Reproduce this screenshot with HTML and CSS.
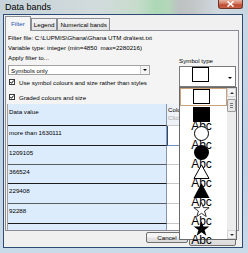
FILE: index.html
```html
<!DOCTYPE html>
<html lang="en">
<head>
    <meta charset="UTF-8">
    <title>Data bands</title>
    <link rel="stylesheet" href="styles.css">
</head>
<body>
    <div class="window">
        <div class="titlebar">
            <span class="title">Data bands</span>
            <span class="close">
                <svg width="9" height="6" viewBox="0 0 9 6"><path d="M1.5 0.5 L7.5 5.5 M7.5 0.5 L1.5 5.5" stroke="#fff" stroke-width="1.6"/></svg>
            </span>
        </div>
        <div class="client">
            <div class="tabs">
                <div class="tab active">Filter</div>
                <div class="tab">Legend</div>
                <div class="tab">Numerical bands</div>
            </div>
            <div class="panel">
                <div class="line">Filter file: C:\LUPMIS\Ghana\Ghana UTM dra\test.txt</div>
                <div class="line">Variable type: integer (min=4850&nbsp; max=2280216)</div>
                <div class="options">
                    <div class="opt-left">
                        <div class="line">Apply filter to...</div>
                        <div class="select">
                            <span>Symbols only</span>
                            <span class="select-btn"><span class="caret"></span></span>
                        </div>
                        <div class="check">
                            <span class="box"><svg width="4" height="4" viewBox="0 0 4 4"><path d="M0.3 1.9 L1.5 3.3 L3.7 0.5" stroke="#000" stroke-width="1" fill="none"/></svg></span>
                            Use symbol colours and size rather than styles
                        </div>
                        <div class="check second">
                            <span class="box"><svg width="4" height="4" viewBox="0 0 4 4"><path d="M0.3 1.9 L1.5 3.3 L3.7 0.5" stroke="#000" stroke-width="1" fill="none"/></svg></span>
                            Graded colours and size
                        </div>
                    </div>
                    <div class="opt-right">
                        <div class="line">Symbol type</div>
                        <div class="combo">
                            <svg class="shape" width="17" height="15" viewBox="0 0 17 15"><rect x="0.5" y="0.5" width="16" height="14" fill="#fff" stroke="#000"/></svg>
                            <span class="caret combo-caret"></span>

                            <div class="droplist">
                                <div class="items">
                                    <div class="item sel">
                                        <div class="sym">
                                            <svg class="shape" width="17" height="15" viewBox="0 0 17 15"><rect x="0.5" y="0.5" width="16" height="14" fill="#fff" stroke="#000"/></svg>
                                        </div>
                                    </div>
                                    <div class="item">
                                        <div class="sym">
                                            <svg class="shape" width="17" height="15" viewBox="0 0 17 15"><rect x="0" y="0" width="17" height="15" fill="#000"/></svg>
                                            <span class="abc">Abc</span>
                                        </div>
                                    </div>
                                    <div class="item">
                                        <div class="sym">
                                            <svg class="shape" width="17" height="15" viewBox="0 0 17 15"><circle cx="8.5" cy="7.5" r="7" fill="#fff" stroke="#000"/></svg>
                                            <span class="abc">Abc</span>
                                        </div>
                                    </div>
                                    <div class="item">
                                        <div class="sym">
                                            <svg class="shape" width="17" height="15" viewBox="0 0 17 15"><circle cx="8.5" cy="7.5" r="7.5" fill="#000"/></svg>
                                            <span class="abc">Abc</span>
                                        </div>
                                    </div>
                                    <div class="item">
                                        <div class="sym">
                                            <svg class="shape" width="17" height="15" viewBox="0 0 17 15"><polygon points="8.5,0.8 1,14.5 16,14.5" fill="#fff" stroke="#000"/></svg>
                                            <span class="abc">Abc</span>
                                        </div>
                                    </div>
                                    <div class="item">
                                        <div class="sym">
                                            <svg class="shape" width="17" height="15" viewBox="0 0 17 15"><polygon points="8.5,0 0.5,15 16.5,15" fill="#000"/></svg>
                                            <span class="abc">Abc</span>
                                        </div>
                                    </div>
                                    <div class="item">
                                        <div class="sym">
                                            <svg class="shape" width="17" height="15" viewBox="0 0 17 15"><polygon points="8.5,0.5 10.38,5.6 16.1,5.7 11.54,9.1 13.2,14.5 8.5,11.3 3.8,14.5 5.46,9.1 0.9,5.7 6.62,5.6" fill="#fff" stroke="#000" stroke-width="0.8"/></svg>
                                            <span class="abc">Abc</span>
                                        </div>
                                    </div>
                                    <div class="item">
                                        <div class="sym">
                                            <svg class="shape" width="17" height="15" viewBox="0 0 17 15"><polygon points="8.5,0 10.38,5.4 16.3,5.5 11.6,9 13.4,14.8 8.5,11.3 3.6,14.8 5.4,9 0.7,5.5 6.62,5.4" fill="#000"/></svg>
                                            <span class="abc">Abc</span>
                                        </div>
                                    </div>
                                </div>
                                <div class="scroll">
                                    <div class="sbtn"><span class="tri up"></span></div>
                                    <div class="thumb"><i></i><i></i><i></i></div>
                                    <div class="track"></div>
                                    <div class="sbtn"><span class="tri"></span></div>
                                </div>
                            </div>
                        </div>
                    </div>
                </div>

                <div class="grid">
                    <div class="cell head">Data value</div>
                    <div class="cell head col2">Colour<br><span class="hint">Click</span></div>

                    <div class="cell dark">more than 1630111</div>
                    <div class="cell col2 focus"></div>

                    <div class="cell soft">1209105</div>
                    <div class="cell col2"></div>

                    <div class="cell dark">366524</div>
                    <div class="cell col2"></div>

                    <div class="cell soft">229408</div>
                    <div class="cell col2"></div>

                    <div class="cell dark">92288</div>
                    <div class="cell col2"></div>

                    <div class="cell last"></div>
                    <div class="cell col2"></div>
                </div>
            </div>
            <div class="buttons">
                <div class="btn cancel">Cancel</div>
                <div class="btn ok"></div>
            </div>
        </div>
    </div>
</body>
</html>
```

FILE: styles.css
```css
/* styles.css */
* {
    box-sizing: border-box;
}

body {
    margin: 0;
    font-family: "Liberation Sans", Arial, sans-serif;
    font-size: 6.2px;
    color: #000;
    background: #c4d5e4;
}

.window {
    width: 248px;
    height: 253px;
    overflow: hidden;
    display: flex;
    flex-direction: column;
    background: linear-gradient(180deg, #c9d8e3 0%, #bfd2e2 60%, #c9dae8 100%);
}

/* glass title bar */
.titlebar {
    height: 14px;
    flex: none;
    display: flex;
    align-items: flex-start;
    background: linear-gradient(90deg, #c6d3da 0%, #d2dbdc 40%, #c7dccc 55%, #acd8b6 63%, #b4d6ba 68%, #bcc2c1 72%, #c2c6c6 78%, #d0d9df 88%, #c6d5e1 100%);
}

.title {
    font-size: 9px;
    line-height: 14px;
    padding-left: 5px;
}

.close {
    margin-left: auto;
    margin-right: 5px;
    width: 25px;
    height: 9px;
    border: 1px solid #6e3526;
    border-top: none;
    border-radius: 0 0 3px 3px;
    background: linear-gradient(#e8b4a4, #d27a60 45%, #bd4a31 60%, #c9644a);
    display: flex;
    align-items: center;
    justify-content: center;
}

.close svg {
    display: block;
}

.client {
    flex: 1;
    margin: 0 5px 5px 3px;
    border: 1px solid #2d4a74;
    background: #f0f0f0;
    padding-top: 1px;
    display: flex;
    flex-direction: column;
}

/* tabs */
.tabs {
    height: 14px;
    flex: none;
    display: flex;
    align-items: flex-end;
    padding-left: 1px;
}

.tab {
    height: 12px;
    line-height: 11px;
    padding: 0 2px;
    border: 1px solid #8a8d94;
    border-bottom: none;
    background: linear-gradient(#f4f4f4, #e1e1e1);
    white-space: nowrap;
}

.tab.active {
    height: 15px;
    line-height: 13px;
    margin-bottom: -1px;
    padding: 0 5px;
    background: #f6f6f6;
    color: #1d55b4;
    position: relative;
    z-index: 1;
}

.panel {
    height: 201px;
    flex: none;
    margin: 0 3px 0 1px;
    border: 1px solid #8a8d94;
    background: #f4f4f4;
    padding: 2px 0 0 2px;
    display: flex;
    flex-direction: column;
}

.line {
    line-height: 10px;
    height: 10px;
    white-space: nowrap;
}

.options {
    display: flex;
    flex: none;
}

.opt-left {
    width: 161px;
}

.select {
    margin-top: 2px;
    width: 142px;
    height: 10px;
    border: 1px solid #a3a3a3;
    background: #fff;
    display: flex;
    align-items: center;
    padding-left: 2px;
}

.select-btn {
    margin-left: auto;
    width: 9px;
    height: 8px;
    border-left: 1px solid #d0d0d0;
    background: #f3f3f3;
    display: flex;
    align-items: center;
    justify-content: center;
}

.caret {
    width: 0;
    height: 0;
    border-left: 2px solid transparent;
    border-right: 2px solid transparent;
    border-top: 2px solid #000;
}

.check {
    display: flex;
    align-items: center;
    height: 10px;
    margin-top: 2px;
    white-space: nowrap;
}

.check.second {
    margin-top: 5px;
}

.box {
    width: 6px;
    height: 6px;
    margin: 0 4px 0 1px;
    border: 1px solid #3c3c3c;
    background: #fff;
    display: flex;
    align-items: center;
    justify-content: center;
}

.box svg {
    display: block;
}

.opt-right {
    margin-left: 10px;
    width: 57px;
    padding-top: 3px;
}

.combo {
    position: relative;
    width: 57px;
    height: 21px;
    border: 1px solid #7a7a7a;
    background: #fff;
    display: flex;
    align-items: flex-start;
    padding-left: 12px;
}

.shape {
    display: block;
}

.combo-caret {
    margin-left: auto;
    margin-right: 3px;
    align-self: center;
    margin-top: 2px;
}

/* open symbol list */
.droplist {
    position: absolute;
    top: 20px;
    left: -1px;
    width: 58px;
    height: 153px;
    border: 1px solid #6a6a6a;
    background: #fff;
    display: flex;
    z-index: 5;
}

.items {
    width: 47px;
}

.item {
    height: 19px;
    padding-left: 13px;
}

.item.sel {
    box-shadow: inset 0 0 0 1px #c9a07a;
    height: 18px;
    margin-bottom: 1px;
    padding-top: 1px;
}

.sym {
    width: 17px;
    display: flex;
    flex-direction: column;
    align-items: center;
}

.abc {
    font-size: 12px;
    line-height: 12px;
    margin-top: -2px;
    white-space: nowrap;
}

.scroll {
    width: 9px;
    background: #ececec;
    display: flex;
    flex-direction: column;
}

.sbtn {
    height: 9px;
    border: 1px solid #d4d4d4;
    background: #f4f4f4;
    display: flex;
    align-items: center;
    justify-content: center;
}

.tri {
    width: 0;
    height: 0;
    border-left: 2px solid transparent;
    border-right: 2px solid transparent;
    border-top: 2px solid #333;
}

.tri.up {
    border-top: none;
    border-bottom: 2px solid #333;
}

.thumb {
    margin-top: 2px;
    height: 13px;
    border: 1px solid #9b9b9b;
    border-radius: 1px;
    background: #e6e6e6;
    display: flex;
    flex-direction: column;
    align-items: center;
    justify-content: center;
    gap: 1px;
}

.thumb i {
    width: 3px;
    height: 1px;
    background: #777;
}

.track {
    flex: 1;
}

/* data grid */
.grid {
    flex: 1;
    margin: 2px 1px 0 -1px;
    overflow: hidden;
    border-left: 1px solid #a0a0a0;
    display: grid;
    grid-template-columns: 159px 1fr;
    grid-template-rows: 22px 20px 19px 19px 20px 20px 20px;
}

.cell {
    background: #ddecfc;
    border-right: 1px solid #8595aa;
    padding: 2px 0 0 1px;
    line-height: 10px;
    white-space: nowrap;
}

.cell.head {
    padding-top: 3px;
    border-bottom: 1px solid #1c1c1c;
}

.cell.dark {
    border-bottom: 1px solid #1c1c1c;
}

.cell.soft {
    border-bottom: 1px solid #5c5c5c;
}

.cell.col2 {
    background: #fff;
    border-right: none;
    border-bottom: 1px solid #c8c8c8;
    padding-left: 1px;
}

.cell.head.col2 {
    background: #eef1f5;
    line-height: 8px;
    padding-top: 2px;
    border-bottom: 1px solid #c8c8c8;
}

.hint {
    color: #a8a8a8;
}

.cell.focus {
    border-left: 1px solid #2d4a74;
    border-bottom: 1px solid #6d8cc0;
}

/* dialog buttons */
.buttons {
    display: flex;
    justify-content: flex-end;
    align-items: flex-start;
    gap: 1px;
    padding: 1px 6px 0 0;
}

.btn {
    border: 1px solid #707070;
    border-radius: 2px;
    background: linear-gradient(#f4f4f4 45%, #e3e3e3 55%, #dadada);
    display: flex;
    align-items: center;
    justify-content: center;
}

.btn.cancel {
    width: 42px;
    height: 11px;
}

.btn.ok {
    width: 47px;
    height: 14px;
}
```
